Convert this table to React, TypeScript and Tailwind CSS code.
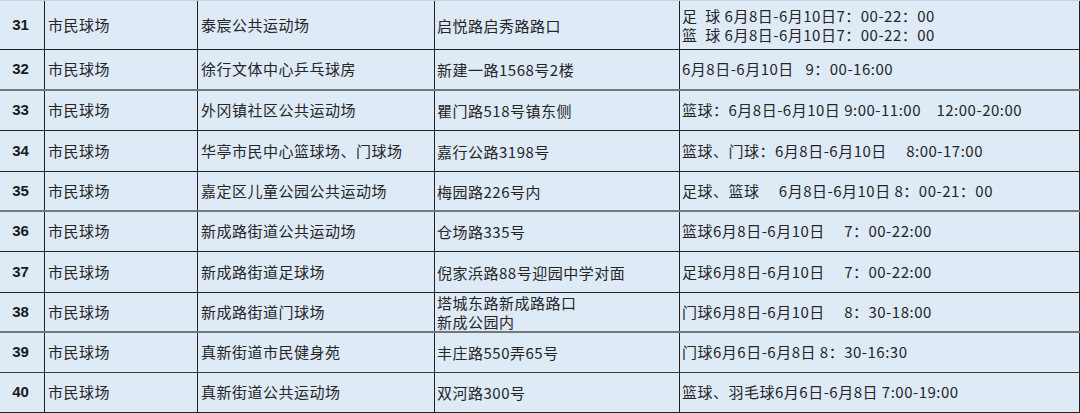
const rows = [
  {
    no: "31",
    venue: "泰宸公共运动场",
    addr: ["启悦路启秀路路口"],
    time: null,
    h: "h-[50px] border-t border-t-[#c9d2de]",
    line: "border-b border-b-[#1f2327]",
  },
  { no: "32", venue: "徐行文体中心乒乓球房", addr: ["新建一路1568号2楼"], time: "6月8日-6月10日   9：00-16:00", h: "h-[41px]", line: "border-b-2 border-b-[#70777e]" },
  { no: "33", venue: "外冈镇社区公共运动场", addr: ["瞿门路518号镇东侧"], time: "篮球：6月8日-6月10日 9:00-11:00    12:00-20:00", h: "h-[40px]", line: "border-b border-b-[#1f2327]" },
  { no: "34", venue: "华亭市民中心篮球场、门球场", addr: ["嘉行公路3198号"], time: "篮球、门球：6月8日-6月10日     8:00-17:00", h: "h-[41px]", line: "border-b border-b-[#1f2327]" },
  { no: "35", venue: "嘉定区儿童公园公共运动场", addr: ["梅园路226号内"], time: "足球、篮球     6月8日-6月10日 8：00-21：00", h: "h-[40px]", line: "border-b-2 border-b-[#70777e]" },
  { no: "36", venue: "新成路街道公共运动场", addr: ["仓场路335号"], time: "篮球6月8日-6月10日     7：00-22:00", h: "h-[40px]", line: "border-b border-b-[#1f2327]" },
  { no: "37", venue: "新成路街道足球场", addr: ["倪家浜路88号迎园中学对面"], time: "足球6月8日-6月10日     7：00-22:00", h: "h-[41px]", line: "border-b border-b-[#1f2327]" },
  { no: "38", venue: "新成路街道门球场", addr: ["塔城东路新成路路口", "新成公园内"], time: "门球6月8日-6月10日     8：30-18:00", h: "h-[40px]", line: "border-b-2 border-b-[#70777e]" },
  { no: "39", venue: "真新街道市民健身苑", addr: ["丰庄路550弄65号"], time: "门球6月6日-6月8日 8：30-16:30", h: "h-[40px]", line: "border-b border-b-[#3a3f44]" },
  { no: "40", venue: "真新街道公共运动场", addr: ["双河路300号"], time: "篮球、羽毛球6月6日-6月8日 7:00-19:00", h: "h-[40px]", line: "border-b border-b-[#1f2327]" },
];

const cjk = "font-['Noto_Sans_CJK_SC',sans-serif] text-[15px] tracking-[0.5px] text-[#262626]";

function Cell({ w, children, className = "" }: { w: string; children: React.ReactNode; className?: string }) {
  return (
    <div className={`${w} shrink-0 h-full flex items-center border-r border-r-[#1f2327] ${className}`}>
      {children}
    </div>
  );
}

export default function App() {
  return (
    <div className="w-[1080px] h-[413px] bg-[#deeaf6] overflow-hidden">
      {rows.map((r) => (
        <div key={r.no} className={`flex w-full ${r.h} ${r.line}`}>
          <Cell w="w-[45px]" className="justify-center">
            <span className="font-['Liberation_Sans',sans-serif] font-bold text-[15px] text-[#1a1a1a] pr-[3px]">{r.no}</span>
          </Cell>
          <Cell w="w-[153px]" className="pl-[3px]">
            <span className={cjk}>市民球场</span>
          </Cell>
          <Cell w="w-[237px]" className="pl-[3px]">
            <span className={cjk}>{r.venue}</span>
          </Cell>
          <Cell w="w-[245px]" className="pl-[2px]">
            <div className={`${cjk} leading-[19px]`}>
              {r.addr.map((a) => (
                <div key={a}>{a}</div>
              ))}
            </div>
          </Cell>
          <Cell w="w-[400px]" className="pl-[2px]">
            {r.time ? (
              <span className={`${cjk} whitespace-pre`}>{r.time}</span>
            ) : (
              <div className={`${cjk} leading-[19px] whitespace-pre`}>
                <div>足{"  "}球 6月8日-6月10日7：00-22：00</div>
                <div>篮{"  "}球 6月8日-6月10日7：00-22：00</div>
              </div>
            )}
          </Cell>
        </div>
      ))}
    </div>
  );
}
